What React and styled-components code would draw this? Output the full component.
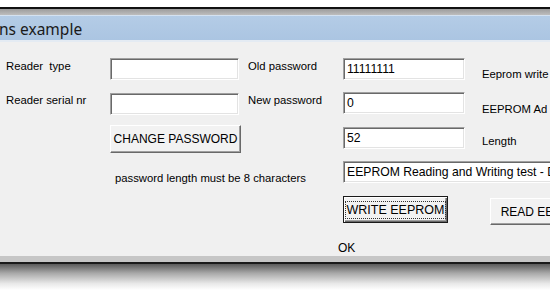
import React from "react";
import styled, { createGlobalStyle } from "styled-components";

const GlobalStyle = createGlobalStyle`
  html, body {
    margin: 0;
    padding: 0;
    background: #ffffff;
    overflow: hidden;
  }
  body {
    font-family: "Liberation Sans", Arial, sans-serif;
  }
`;

const Screen = styled.div`
  width: 550px;
  height: 296px;
  background: #ffffff;
  display: flex;
  flex-direction: column;
  overflow: hidden;
`;

const TopGap = styled.div`
  height: 7px;
  flex-shrink: 0;
`;

const Frame = styled.div`
  border-top: 2px solid #111111;
  border-bottom: 2px solid #1a1a1a;
  display: flex;
  flex-direction: column;
  flex-shrink: 0;
`;

const FrameBand = styled.div`
  height: ${(p) => p.h}px;
  background: ${(p) => p.bg};
`;

const TitleBar = styled.div`
  height: 24px;
  background: linear-gradient(#b4cce6, #abc5e2);
  border-top: 1px solid #d4e2f1;
  border-bottom: 2px solid #e4ebf3;
  display: flex;
  align-items: center;
  font-family: "Noto Sans", "Open Sans", sans-serif;
  font-size: 15.5px;
  color: #1a1a1a;
`;

const TitleText = styled.span`
  margin-left: -1px;
  margin-top: 2px;
`;

const Body = styled.div`
  height: 214px;
  background: #f0f0f0;
  padding: 16px 0 0 6px;
  box-sizing: border-box;
  display: grid;
  grid-template-columns: 104px 138px 95px 139px 1fr;
  grid-template-rows: 34px 33px 36px 35px 40px auto;
  align-items: start;
  font-size: 11.3px;
  color: #000000;
`;

const Label = styled.div`
  line-height: 14px;
  white-space: nowrap;
  overflow: hidden;
  margin-top: ${(p) => p.top || 0}px;
  margin-left: ${(p) => p.left || 0}px;
  grid-column: ${(p) => p.col};
  font-size: ${(p) => (p.big ? "12px" : "inherit")};
`;

const Field = styled.div`
  grid-column: ${(p) => p.col};
  margin-top: ${(p) => p.top || 0}px;
  width: ${(p) => p.w}px;
  height: 22px;
  box-sizing: border-box;
  background: #ffffff;
  border: 1px solid;
  border-color: #a0a0a0 #ffffff #ffffff #a0a0a0;
  box-shadow: inset 1px 1px 0 #696969, inset -1px -1px 0 #e3e3e3;
  padding: 3px 0 0 3px;
  font-size: 12.2px;
  line-height: 15px;
  white-space: nowrap;
  overflow: hidden;
`;

const Button = styled.div`
  grid-column: ${(p) => p.col};
  margin-top: ${(p) => p.top || 0}px;
  margin-left: ${(p) => p.left || 0}px;
  width: ${(p) => p.w}px;
  height: ${(p) => p.h}px;
  box-sizing: border-box;
  background: #f2f2f2;
  border: 1px solid;
  border-color: ${(p) =>
    p.primary ? "#1a1a1a" : "#ffffff #696969 #696969 #ffffff"};
  box-shadow: ${(p) =>
    p.primary
      ? "inset 1px 1px 0 #ffffff, inset -1px -1px 0 #696969, inset -2px -2px 0 #a0a0a0"
      : "inset -1px -1px 0 #a0a0a0"};
  display: flex;
  align-items: center;
  justify-content: center;
  font-size: 12px;
  white-space: nowrap;
  overflow: hidden;
`;

const Focus = styled.span`
  border: 1px dotted #333333;
  padding: 1px 1px;
  line-height: 14px;
  font-size: 12.5px;
`;

const Shadow = styled.div`
  height: 26px;
  background: linear-gradient(#5a5a5a, #a8a8a8 35%, #e8e8e8 75%, #ffffff);
  flex-shrink: 0;
`;

export default function App() {
  return (
    <>
      <GlobalStyle />
      <Screen>
        <TopGap />
        <Frame>
          <FrameBand h={6} bg="linear-gradient(#9c9c9c, #bdbdbd)" />
          <TitleBar>
            <TitleText>ns example</TitleText>
          </TitleBar>
          <Body>
            <Label col={1} top={1}>Reader&nbsp;&nbsp;type</Label>
            <Field col={2} w={129} />
            <Label col={3} top={1}>Old password</Label>
            <Field col={4} w={122}>11111111</Field>
            <Label col={5} top={9}>Eeprom write</Label>

            <Label col={1} top={1}>Reader serial nr</Label>
            <Field col={2} w={129} top={1} />
            <Label col={3} top={1}>New password</Label>
            <Field col={4} w={122}>0</Field>
            <Label col={5} top={10}>EEPROM Ad</Label>

            <Button col={2} w={131} h={28}>CHANGE PASSWORD</Button>
            <Field col={4} w={122} top={2}>52</Field>
            <Label col={5} top={9}>Length</Label>

            <Label col="2 / span 2" top={10} left={5}>
              password length must be 8 characters
            </Label>
            <Field col="4 / span 2" w={215}>
              EEPROM Reading and Writing test - Dig
            </Field>

            <Button col={4} w={105} h={27} primary>
              <Focus>WRITE EEPROM</Focus>
            </Button>
            <Button col={5} w={110} h={27} top={2} left={8}>
              READ EEPROM
            </Button>

            <Label col={4} left={-5} top={5} big>OK</Label>
          </Body>
          <FrameBand h={6} bg="#c6c6c6" />
        </Frame>
        <Shadow />
      </Screen>
    </>
  );
}
